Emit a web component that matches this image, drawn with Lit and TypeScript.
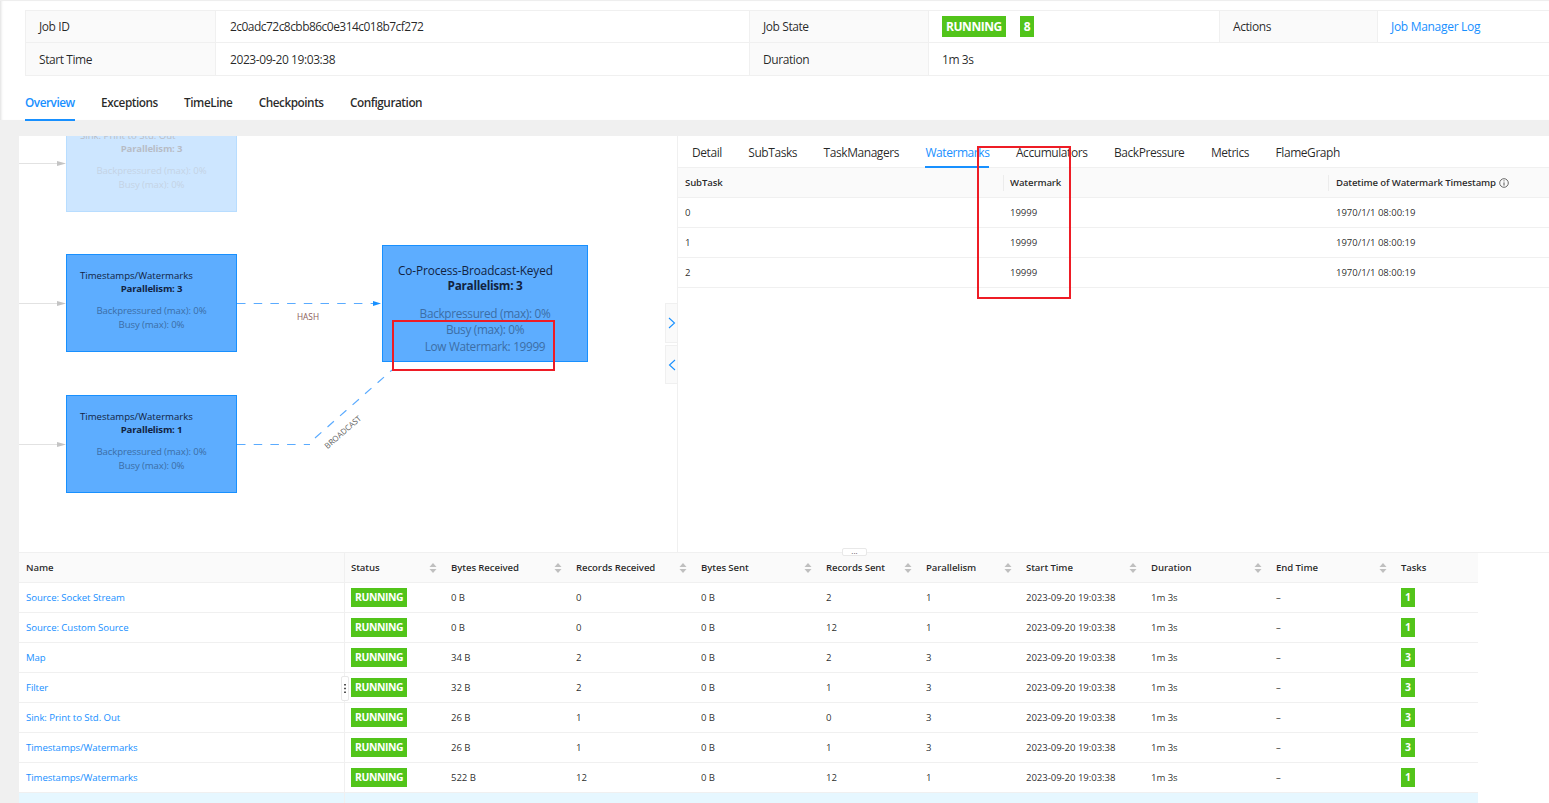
import { LitElement, html, css, svg } from "lit";
import { customElement } from "lit/decorators.js";

const FONT = css`"Open Sans", "Noto Sans", sans-serif`;

const RIGHT_TABS = ["Detail", "SubTasks", "TaskManagers", "Watermarks", "Accumulators", "BackPressure", "Metrics", "FlameGraph"];
const MAIN_TABS = ["Overview", "Exceptions", "TimeLine", "Checkpoints", "Configuration"];

const COLUMNS = [
  { t: "Name", sort: false },
  { t: "Status", sort: true },
  { t: "Bytes Received", sort: true },
  { t: "Records Received", sort: true },
  { t: "Bytes Sent", sort: true },
  { t: "Records Sent", sort: true },
  { t: "Parallelism", sort: true },
  { t: "Start Time", sort: true },
  { t: "Duration", sort: true },
  { t: "End Time", sort: true },
  { t: "Tasks", sort: false },
];

const ROWS = [
  ["Source: Socket Stream", "0 B", "0", "0 B", "2", "1", "1"],
  ["Source: Custom Source", "0 B", "0", "0 B", "12", "1", "1"],
  ["Map", "34 B", "2", "0 B", "2", "3", "3"],
  ["Filter", "32 B", "2", "0 B", "1", "3", "3"],
  ["Sink: Print to Std. Out", "26 B", "1", "0 B", "0", "3", "3"],
  ["Timestamps/Watermarks", "26 B", "1", "0 B", "1", "3", "3"],
  ["Timestamps/Watermarks", "522 B", "12", "0 B", "12", "1", "1"],
];

const NODES = [
  { x: 47, y: -22, title: "Sink: Print to Std. Out", p: 3, faded: true },
  { x: 47, y: 118, title: "Timestamps/Watermarks", p: 3 },
  { x: 47, y: 259, title: "Timestamps/Watermarks", p: 1 },
];

const sortIcon = svg`<svg class="sort" width="8" height="12" viewBox="0 0 8 12"><path d="M4 1 L7.5 5 H.5 Z M4 11 L.5 7 H7.5 Z" fill="#bfbfbf"/></svg>`;

@customElement("app-root")
export class AppRoot extends LitElement {
  static styles = css`
    :host { display: block; width: 1549px; height: 803px; overflow: hidden; position: relative; background: #fff;
      font-family: ${FONT}; color: rgba(0,0,0,.85); }
    * { box-sizing: border-box; }
    .head { height: 120px; border-top: 1px solid #eee; padding: 9px 0 0 25px; box-shadow: inset 3px 0 3px -2px #ddd; background: #fff; position: relative; }
    .desc { display: grid; width: 1525px; grid-template-columns: 190px 534px 179px 291px 158px 172px; grid-template-rows: 32px 33px;
      border-top: 1px solid #f0f0f0; border-left: 1px solid #f0f0f0; font-size: 12px; letter-spacing: -.42px; }
    .desc > div { display: flex; align-items: center; padding-left: 13px; border-right: 1px solid #f0f0f0; border-bottom: 1px solid #f0f0f0; }
    .desc .lab { background: #fafafa; }
    .desc .first { padding-left: 14px; }
    .desc .jid { letter-spacing: -.54px; }
    .desc .wide { grid-column: span 3; }
    .desc a { color: #1890ff; letter-spacing: -.3px; }
    .desc .state { gap: 14px; }
    .big-tag { background: #52c41a; color: #fff; font-weight: 700; font-size: 12px; height: 21px; line-height: 21px; padding: 0 4px; letter-spacing: -.45px; }
    .nav { display: flex; gap: 26.3px; height: 45px; font-size: 11.8px; font-weight: 600; letter-spacing: -.47px; }
    .nav div { height: 45px; padding-top: 16px; line-height: 20px; border-bottom: 2px solid transparent; white-space: nowrap; }
    .nav .on { color: #1890ff; border-bottom-color: #1890ff; }
    .body { height: 683px; background: #f0f0f0; padding: 16px 0 0 19px; }
    .main { height: 667px; background: #fff; overflow: hidden; }
    .split { display: grid; grid-template-columns: 659px 1fr; height: 416px; }
    .graph { position: relative; overflow: hidden; background: #fff; border-right: 1px solid #f0f0f0; }
    .edges { position: absolute; left: 0; top: 0; width: 659px; height: 416px; }
    .node { position: absolute; width: 171px; height: 98px; background: #5dadff; border: 1px solid #1890ff; font-size: 9.6px; line-height: 14px; padding-top: 14px; text-align: center; color: #12233f; }
    .node.faded { opacity: .3; }
    .node .ti { text-align: left; padding-left: 13px; white-space: nowrap; font-weight: 500; letter-spacing: 0; line-height: 13px; }
    .node .pa { font-weight: 700; letter-spacing: -.2px; }
    .node .st { color: #3c6ea6; letter-spacing: -.1px; }
    .node .st.first { margin-top: 8px; }
    .node.big { left: 363px; top: 109px; width: 206px; height: 117px; font-size: 11.8px; line-height: 16px; padding-top: 17px; }
    .node.big .ti { padding-left: 15px; letter-spacing: -.1px; line-height: 15px; }
    .node.big .pa { line-height: 15px; letter-spacing: -.3px; }
    .node.big .st { line-height: 16.4px; letter-spacing: -.32px; }
    .node.big .st.first { margin-top: 12px; }
    .toggle { position: absolute; left: 646px; width: 13px; background: #fafafa; border: 1px solid #f0f0f0; display: flex; align-items: center; justify-content: center; }
    .toggle.a { top: 167px; height: 40px; }
    .toggle.b { top: 209px; height: 39px; }
    .edge-l { font-size: 8.3px; color: #8a5a5a; position: absolute; white-space: nowrap; }
    .hash { left: 278px; top: 175px; }
    .edge-l.bcast { left: 301px; top: 291px; font-size: 7.9px; transform: rotate(-41deg); color: #5b5b5b; }
    .side { background: #fff; }
    .rtabs { display: flex; gap: 26.5px; height: 32px; padding-left: 14px; border-bottom: 1px solid #f0f0f0; font-size: 12px; font-weight: 500; letter-spacing: -.44px; }
    .rtabs div { height: 32px; line-height: 33px; border-bottom: 2px solid transparent; white-space: nowrap; }
    .rtabs .on { color: #1890ff; border-bottom-color: #1890ff; }
    .wm { display: grid; grid-template-columns: 325px 325px 1fr; font-size: 9.6px; }
    .wm > div { height: 30px; display: flex; align-items: center; padding-left: 7px; border-bottom: 1px solid #f0f0f0; letter-spacing: -.06px; }
    .wm > div:nth-child(3n) { padding-left: 8px; }
    .wm .th { background: #fafafa; font-weight: 600; letter-spacing: -.14px; height: 30px; gap: 3px; position: relative; }
    .wm .th.sep::before { content: ""; position: absolute; left: 0; top: 7px; height: 16px; width: 1px; background: #ececec; }
    .tbl { position: relative; width: 1459px; font-size: 9.6px; border-top: 1px solid #f0f0f0; }
    .tr { display: grid; grid-template-columns: 326px 100px 125px 125px 125px 100px 100px 125px 125px 125px 83px; height: 30px; border-bottom: 1px solid #f0f0f0; }
    .tr > div { display: flex; align-items: center; padding-left: 6px; letter-spacing: -.06px; white-space: nowrap; position: relative; }
    .tr > div:first-child { padding-left: 7px; border-right: 1px solid #f0f0f0; }
    .thead { background: #fafafa; font-weight: 600; height: 30px; }
    .thead > div { letter-spacing: -.1px; }
    .sort { position: absolute; right: 8px; top: 9px; }
    .name { color: #1890ff; }
    .tr .tag { background: #52c41a; color: #fff; font-weight: 700; font-size: 10.4px; height: 19px; line-height: 19px; padding: 0 4px; letter-spacing: -.4px; }
    .tr.sel { background: #e6f7ff; border-bottom: 0; }
    .tr.sel .tag { margin-top: 9px; }
    .top-rule { position: absolute; left: 19px; right: 0; top: 552px; height: 1px; background: #f0f0f0; }
    .grip { position: absolute; left: 842px; top: 548px; width: 25px; height: 8px; background: #fff; border: 1px solid #e8e8e8; border-radius: 2px;
      font-size: 8px; line-height: 3px; text-align: center; color: #555; }
    .vgrip { position: absolute; left: 341px; top: 676px; width: 8px; height: 25px; background: #fff; border: 1px solid #e8e8e8; border-radius: 2px; display: flex; align-items: center; justify-content: center; }
    .mark { position: absolute; border: 2px solid #ee1c25; }
    .m1 { left: 392px; top: 320px; width: 163px; height: 51px; }
    .m2 { left: 977px; top: 146px; width: 94px; height: 153px; }
  `;

  private node(n: { x: number; y: number; title: string; p: number; faded?: boolean }) {
    return html`<div class="node ${n.faded ? "faded" : ""}" style="left:${n.x}px;top:${n.y}px">
      <div class="ti">${n.title}</div>
      <div class="pa">Parallelism: ${n.p}</div>
      <div class="st first">Backpressured (max): 0%</div>
      <div class="st">Busy (max): 0%</div>
    </div>`;
  }

  render() {
    return html`
      <div class="head">
        <div class="desc">
          <div class="lab">Job ID</div>
          <div class="first jid">2c0adc72c8cbb86c0e314c018b7cf272</div>
          <div class="lab">Job State</div>
          <div class="state"><span class="big-tag">RUNNING</span><span class="big-tag">8</span></div>
          <div class="lab">Actions</div>
          <div><a>Job Manager Log</a></div>
          <div class="lab">Start Time</div>
          <div class="first">2023-09-20 19:03:38</div>
          <div class="lab">Duration</div>
          <div class="wide">1m 3s</div>
        </div>
        <div class="nav">${MAIN_TABS.map((t, i) => html`<div class=${i === 0 ? "on" : ""}>${t}</div>`)}</div>
      </div>
      <div class="body">
        <div class="main">
          <div class="split">
            <div class="graph">
              <svg class="edges" viewBox="0 0 659 416" fill="none">
                <g stroke="#e2e2e2" stroke-width="1">
                  <path d="M0 27.5 H40 M0 167.5 H40 M0 308.5 H40" />
                </g>
                <g fill="#c4c4c4">
                  <path d="M38 25 L47 27.5 L38 30 Z M38 165 L47 167.5 L38 170 Z M38 306 L47 308.5 L38 311 Z" />
                </g>
                <g stroke="#5aabff" stroke-width="1.2" stroke-dasharray="8.5 8.2">
                  <path d="M218 167.5 H356" />
                  <path d="M218 308.5 H291" />
                  <path d="M296 302 L373 234" />
                </g>
                <path d="M354 165 L362 167.5 L354 170 Z" fill="#1890ff" />
              </svg>
              ${NODES.map((n) => this.node(n))}
              <div class="node big">
                <div class="ti">Co-Process-Broadcast-Keyed</div>
                <div class="pa">Parallelism: 3</div>
                <div class="st first">Backpressured (max): 0%</div>
                <div class="st">Busy (max): 0%</div>
                <div class="st">Low Watermark: 19999</div>
              </div>
              <span class="edge-l hash">HASH</span>
              <span class="edge-l bcast">BROADCAST</span>
              <div class="toggle a"><svg width="8" height="12" viewBox="0 0 8 12" fill="none"><path d="M1 1 L6.5 6 L1 11" stroke="#1890ff" stroke-width="1.1"/></svg></div>
              <div class="toggle b"><svg width="8" height="12" viewBox="0 0 8 12" fill="none"><path d="M7 1 L1.5 6 L7 11" stroke="#1890ff" stroke-width="1.1"/></svg></div>
            </div>
            <div class="side">
              <div class="rtabs">${RIGHT_TABS.map((t) => html`<div class=${t === "Watermarks" ? "on" : ""}>${t}</div>`)}</div>
              <div class="wm">
                <div class="th">SubTask</div>
                <div class="th sep">Watermark</div>
                <div class="th sep">Datetime of Watermark Timestamp
                  <svg width="10" height="10" viewBox="0 0 10 10" fill="none"><circle cx="5" cy="5" r="4.3" stroke="#444" stroke-width=".8"/><path d="M5 4.4 V7.6 M5 2.4 V3.4" stroke="#444" stroke-width=".9"/></svg>
                </div>
                ${[0, 1, 2].map((i) => html`<div>${i}</div><div>19999</div><div>1970/1/1 08:00:19</div>`)}
              </div>
            </div>
          </div>
          <div class="tbl">
            <div class="tr thead">${COLUMNS.map((c) => html`<div>${c.t}${c.sort ? sortIcon : ""}</div>`)}</div>
            ${ROWS.map((r) => html`<div class="tr">
              <div class="name">${r[0]}</div>
              <div><span class="tag">RUNNING</span></div>
              <div>${r[1]}</div><div>${r[2]}</div><div>${r[3]}</div><div>${r[4]}</div><div>${r[5]}</div>
              <div>2023-09-20 19:03:38</div><div>1m 3s</div><div>–</div>
              <div><span class="tag">${r[6]}</span></div>
            </div>`)}
            <div class="tr sel">
              <div></div><div><span class="tag">RUNNING</span></div>
              <div></div><div></div><div></div><div></div><div></div><div></div><div></div><div></div>
              <div><span class="tag">3</span></div>
            </div>
          </div>
        </div>
      </div>
      <div class="top-rule"></div>
      <div class="grip">...</div>
      <div class="vgrip"><svg width="2" height="11" viewBox="0 0 2 11"><path d="M0 1h2v1.4H0zM0 4.8h2v1.4H0zM0 8.6h2v1.4H0z" fill="#555"/></svg></div>
      <div class="mark m1"></div>
      <div class="mark m2"></div>
    `;
  }
}
